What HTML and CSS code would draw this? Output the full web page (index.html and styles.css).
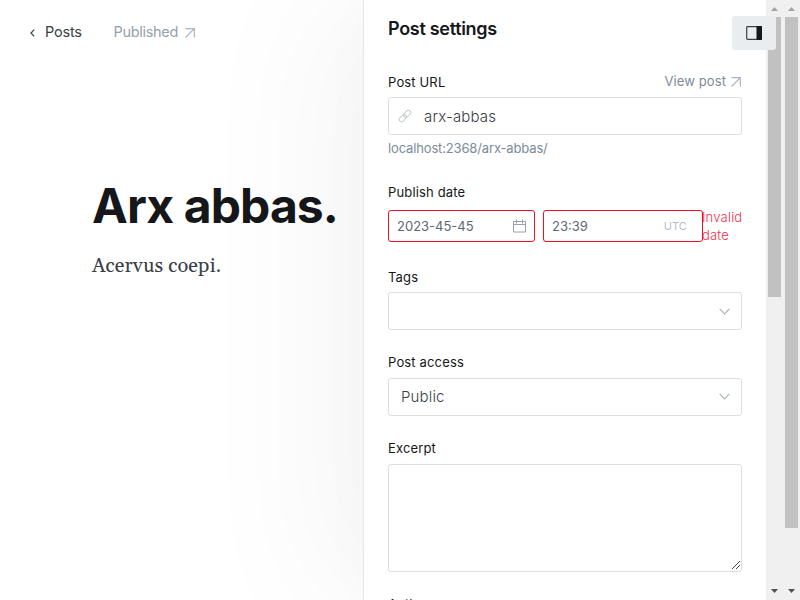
FILE: index.html
```html
<!DOCTYPE html>
<html lang="en">
<head>
<meta charset="utf-8">
<title>Post settings</title>
<link rel="stylesheet" href="styles.css">
</head>
<body>
<div class="app">
  <main class="editor">
    <header class="toolbar">
      <a class="back"><svg width="5" height="8" viewBox="0 0 5 8"><path d="M4.200.700 1 4l3.200 3.300"/></svg><span>Posts</span></a>
      <a class="status"><span>Published</span><svg class="arrow" width="10" height="10" viewBox="0 0 10 10"><path d="M.500.700h8.800v8.800M9.300.700.500 9.500"/></svg></a>
    </header>
    <article class="post">
      <h1 class="title">Arx abbas.</h1>
      <p class="content">Acervus coepi.</p>
    </article>
  </main>
  <aside class="settings">
    <h2 class="heading">Post settings</h2>
    <section class="group url">
      <div class="label-row"><label class="label">Post URL</label><a class="view"><span>View post</span><svg class="arrow" width="10" height="10" viewBox="0 0 10 10"><path d="M.500.700h8.800v8.800M9.300.700.500 9.500"/></svg></a></div>
      <div class="field">
        <svg class="link" width="14" height="14" viewBox="0 0 14 14"><g transform="rotate(-45 7 7)"><rect x="-.2" y="4.700" width="8.200" height="4.600" rx="2.300"/><rect x="6" y="4.700" width="8.200" height="4.600" rx="2.300"/></g></svg>
        <span>arx-abbas</span>
      </div>
      <p class="hint">localhost:2368/arx-abbas/</p>
    </section>
    <section class="group date">
      <label class="label">Publish date</label>
      <div class="date-row">
        <div class="date-field day"><span>2023-45-45</span><svg width="14" height="14" viewBox="0 0 14 14"><path d="M1.500 2.500h12v10.500h-12zM1.500 5.500h12M4.500.500v4M10.500.500v4"/></svg></div>
        <div class="date-field time"><span>23:39</span><small class="zone">UTC</small></div>
        <div class="error">Invalid date</div>
      </div>
    </section>
    <section class="group tags">
      <label class="label">Tags</label>
      <div class="field select"><span></span><svg class="chevron" width="11" height="7" viewBox="0 0 11 7"><path d="m.7.800 4.800 5 4.800-5"/></svg></div>
    </section>
    <section class="group access">
      <label class="label">Post access</label>
      <div class="field select"><span>Public</span><svg class="chevron" width="11" height="7" viewBox="0 0 11 7"><path d="m.7.800 4.800 5 4.800-5"/></svg></div>
    </section>
    <section class="group excerpt">
      <label class="label">Excerpt</label>
      <div class="area"><svg width="9" height="9" viewBox="0 0 9 9" shape-rendering="crispEdges"><path d="M.5 8.500l8-8M4.500 8.500l4-4"/></svg></div>
    </section>
    <section class="group authors"><label class="label">Authors</label></section>
  </aside>
  <div class="scrollbar inner"><i class="up"></i><b class="thumb"></b><i class="down"></i></div>
  <div class="scrollbar outer"><i class="up"></i><b class="thumb"></b><i class="down"></i></div>
  <button class="toggle" aria-label="Settings"><svg width="16" height="14" viewBox="0 0 16 14"><rect x=".7" y=".7" width="14.600" height="12.600" rx=".8"/><path d="M10.500 0H15a1 1 0 0 1 1 1v12a1 1 0 0 1-1 1h-4.500z"/></svg></button>
</div>
</body>
</html>
```

FILE: styles.css
```css
* { box-sizing: border-box; }
body { margin: 0; font-family: Inter, sans-serif; color: #15171a; background: #fff; }
h1, h2, p { margin: 0; }
svg { display: block; flex: none; fill: none; }
.app { position: relative; display: flex; width: 800px; height: 600px; overflow: hidden; }

.editor { width: 364px; flex: none; }
.toolbar { display: flex; align-items: center; height: 64px; padding-left: 30px; font-size: 14.5px; letter-spacing: -.2px; }
.toolbar span { margin-top: -1px; }
.back { display: flex; align-items: center; gap: 10px; width: 83.500px; color: #394047; }
.back svg { stroke: #394047; stroke-width: 1.2; margin-top: 2px; }
.status { display: flex; align-items: center; gap: 7px; letter-spacing: -.3px; color: #95a1ad; }
.arrow { stroke: #abb4be; stroke-width: 1.2; }
.toolbar .arrow { margin-top: 1px; }
.post { padding: 112px 0 0 92px; }
.title { font-size: 48px; line-height: 60px; font-weight: 700; letter-spacing: -.9px; white-space: nowrap; }
.content { margin-top: 15px; font: 20px/30px Georgia, Gelasio, "Liberation Serif", serif; letter-spacing: .12px; color: #394047; }

.settings {
  position: relative;
  width: 402px;
  flex: none;
  padding: 16px 24px 0;
  background: #fff;
  box-shadow: -1px 0 0 #e6e6e6, -12px 0 40px rgba(0, 0, 0, .016), -50px 0 130px rgba(0, 0, 0, .04);
}
.heading { height: 26px; font-size: 18px; line-height: 26px; font-weight: 600; letter-spacing: -.3px; }
.label { display: block; height: 18px; font-size: 13px; line-height: 18px; font-weight: 400; letter-spacing: .15px; }
.label-row { display: flex; justify-content: space-between; }
.url { margin-top: 31px; }
.view { display: flex; align-items: center; gap: 5px; height: 17px; padding-right: 1px; font-size: 13px; letter-spacing: .1px; color: #7c8b9a; }
.view span { margin-top: -1px; }
.field {
  display: flex;
  align-items: center;
  height: 38px;
  margin-top: 6px;
  padding: 0 12px;
  border: 1px solid #dddedf;
  border-radius: 3px;
  font-size: 15px;
  font-weight: 300;
  letter-spacing: .15px;
  color: #394047;
}
.url .field { padding-left: 9px; gap: 12px; }
.link { stroke: #c8ced3; stroke-width: 1; overflow: visible; }
.hint { height: 18px; margin-top: 4px; font-size: 13px; line-height: 18px; letter-spacing: -.15px; color: #7c8b9a; }
.date { margin-top: 26px; }
.date-row { display: flex; height: 32px; margin-top: 9px; }
.date-field {
  display: flex;
  align-items: center;
  justify-content: space-between;
  flex: none;
  padding: 0 8px;
  border: 1px solid #f50b23;
  border-radius: 3px;
  font-size: 13px;
  color: #5d6874;
}
.day { width: 147px; margin-right: 8px; }
.day svg { stroke: #95a1ad; stroke-width: 1; }
.time { width: 160px; padding-right: 15px; }
.zone { font-size: 11px; letter-spacing: .1px; color: #b4bec8; }
.error { font-size: 13px; line-height: 18px; margin: -2px 0 0 -1px; color: #f5304b; font-weight: 300; letter-spacing: .2px; }
.tags { margin-top: 26px; }
.select { justify-content: space-between; padding-right: 11px; }
.chevron { stroke: #abb4be; stroke-width: 1.2; }
.access { margin-top: 23px; }
.access .field { margin-top: 7px; padding-bottom: 1px; }
.excerpt { margin-top: 23px; }
.area {
  display: flex;
  align-items: flex-end;
  justify-content: flex-end;
  height: 108px;
  margin-top: 7px;
  padding: 1px;
  border: 1px solid #dddedf;
  border-radius: 3px;
}
.area svg { stroke: #444; stroke-width: 1; }
.authors { margin-top: 23px; }

.scrollbar { display: flex; flex-direction: column; align-items: center; width: 17px; height: 600px; flex: none; background: #f0f0f0; position: relative; }
.up { width: 7px; height: 4px; margin: 7px 0 6px; background: #a3a3a3; clip-path: polygon(0 100%, 50% 0, 100% 100%); }
.down { width: 7px; height: 4px; margin: auto 0 7px; background: #505050; clip-path: polygon(0 0, 100% 0, 50% 100%); }
.thumb { width: 13px; background: #c1c1c1; }
.inner .thumb { height: 280px; }
.outer .thumb { height: 511px; }
.toggle {
  position: absolute;
  top: 16px;
  left: 732px;
  display: flex;
  align-items: center;
  justify-content: center;
  width: 44px;
  height: 34px;
  padding: 0;
  border: 0;
  border-radius: 3px;
  background: #e9edf0;
}
.toggle rect { stroke: #394047; stroke-width: 1.2; }
.toggle path { fill: #15171a; }
```
